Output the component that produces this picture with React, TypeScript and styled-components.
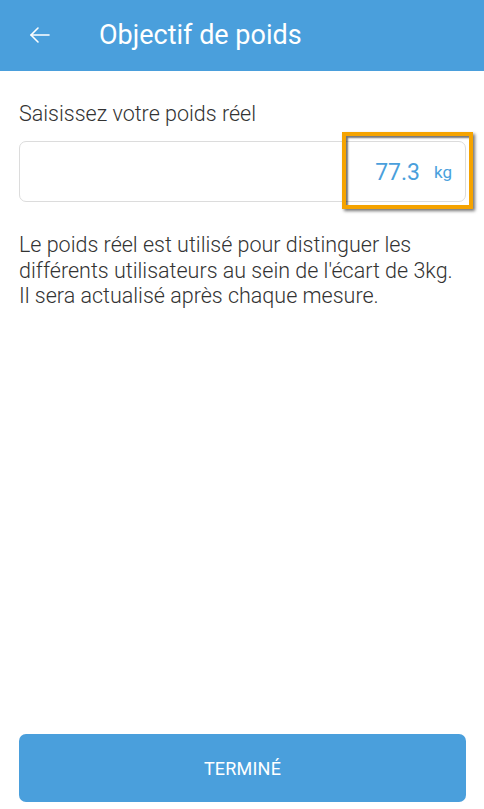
import React from 'react';
import styled, { createGlobalStyle } from 'styled-components';

const GlobalStyle = createGlobalStyle`
  html, body {
    margin: 0;
    padding: 0;
    background: #fff;
    font-family: Roboto, 'Noto Sans', Arial, sans-serif;
  }
  * { box-sizing: border-box; }
`;

const Page = styled.div`
  display: flex;
  flex-direction: column;
  min-height: 100vh;
`;

const Header = styled.header`
  height: 71px;
  background: #4a9fdc;
  display: flex;
  align-items: center;
  padding-left: 28px;
  padding-bottom: 2px;
`;

const BackButton = styled.button`
  background: none;
  border: 0;
  padding: 0;
  width: 24px;
  height: 24px;
  display: flex;
  align-items: center;
  justify-content: center;
  cursor: pointer;
`;

const Title = styled.h1`
  margin: 0 0 0 47px;
  font-size: 27px;
  line-height: 32px;
  font-weight: 400;
  color: #fff;
`;

const Content = styled.main`
  padding: 0 18px 0 19px;
  flex: 1;
  display: flex;
  flex-direction: column;
`;

const Label = styled.div`
  margin-top: 31px;
  font-size: 21.5px;
  font-weight: 300;
  color: #333;
  line-height: 24px;
`;

const Field = styled.div`
  position: relative;
  margin-top: 15px;
  height: 61px;
  border: 1px solid #dcdcdc;
  border-radius: 7px;
  display: flex;
  align-items: center;
  justify-content: flex-end;
  padding-right: 13px;
  gap: 14px;
`;

const Value = styled.span`
  font-size: 23px;
  font-weight: 400;
  color: #4a9fdc;
  margin-top: 2px;
`;

const Unit = styled.span`
  font-size: 17px;
  color: #4a9fdc;
`;

const Highlight = styled.div`
  position: absolute;
  left: 322px;
  top: -10px;
  width: 131px;
  height: 77px;
  border: 4px solid #f5a300;
  box-shadow: 2px 2px 3px rgba(0, 0, 0, 0.55), inset 2px 2px 2px rgba(0, 0, 0, 0.55);
  pointer-events: none;
`;

const Description = styled.p`
  margin: 30px 0 0;
  font-size: 21.5px;
  font-weight: 300;
  line-height: 25.5px;
  color: #333;
`;

const Footer = styled.div`
  padding: 0 18px 7px 19px;
  margin-top: auto;
`;

const DoneButton = styled.button`
  width: 100%;
  height: 68px;
  border: 0;
  border-radius: 7px;
  background: #4a9fdc;
  color: #fff;
  font-family: inherit;
  font-size: 18px;
  letter-spacing: 0.2px;
  cursor: pointer;
`;

export default function App() {
  return (
    <>
      <GlobalStyle />
      <Page>
        <Header>
          <BackButton aria-label="Retour">
            <svg width="24" height="24" viewBox="0 0 24 24" fill="none" stroke="#fff" strokeWidth="1.6" strokeLinecap="round" strokeLinejoin="round">
              <path d="M21 12H3" />
              <path d="M10 5l-7 7 7 7" />
            </svg>
          </BackButton>
          <Title>Objectif de poids</Title>
        </Header>
        <Content>
          <Label>Saisissez votre poids réel</Label>
          <Field>
            <Value>77.3</Value>
            <Unit>kg</Unit>
            <Highlight />
          </Field>
          <Description>
            Le poids réel est utilisé pour distinguer les différents utilisateurs au sein de l'écart de 3kg. Il sera actualisé après chaque mesure.
          </Description>
        </Content>
        <Footer>
          <DoneButton>TERMINÉ</DoneButton>
        </Footer>
      </Page>
    </>
  );
}
